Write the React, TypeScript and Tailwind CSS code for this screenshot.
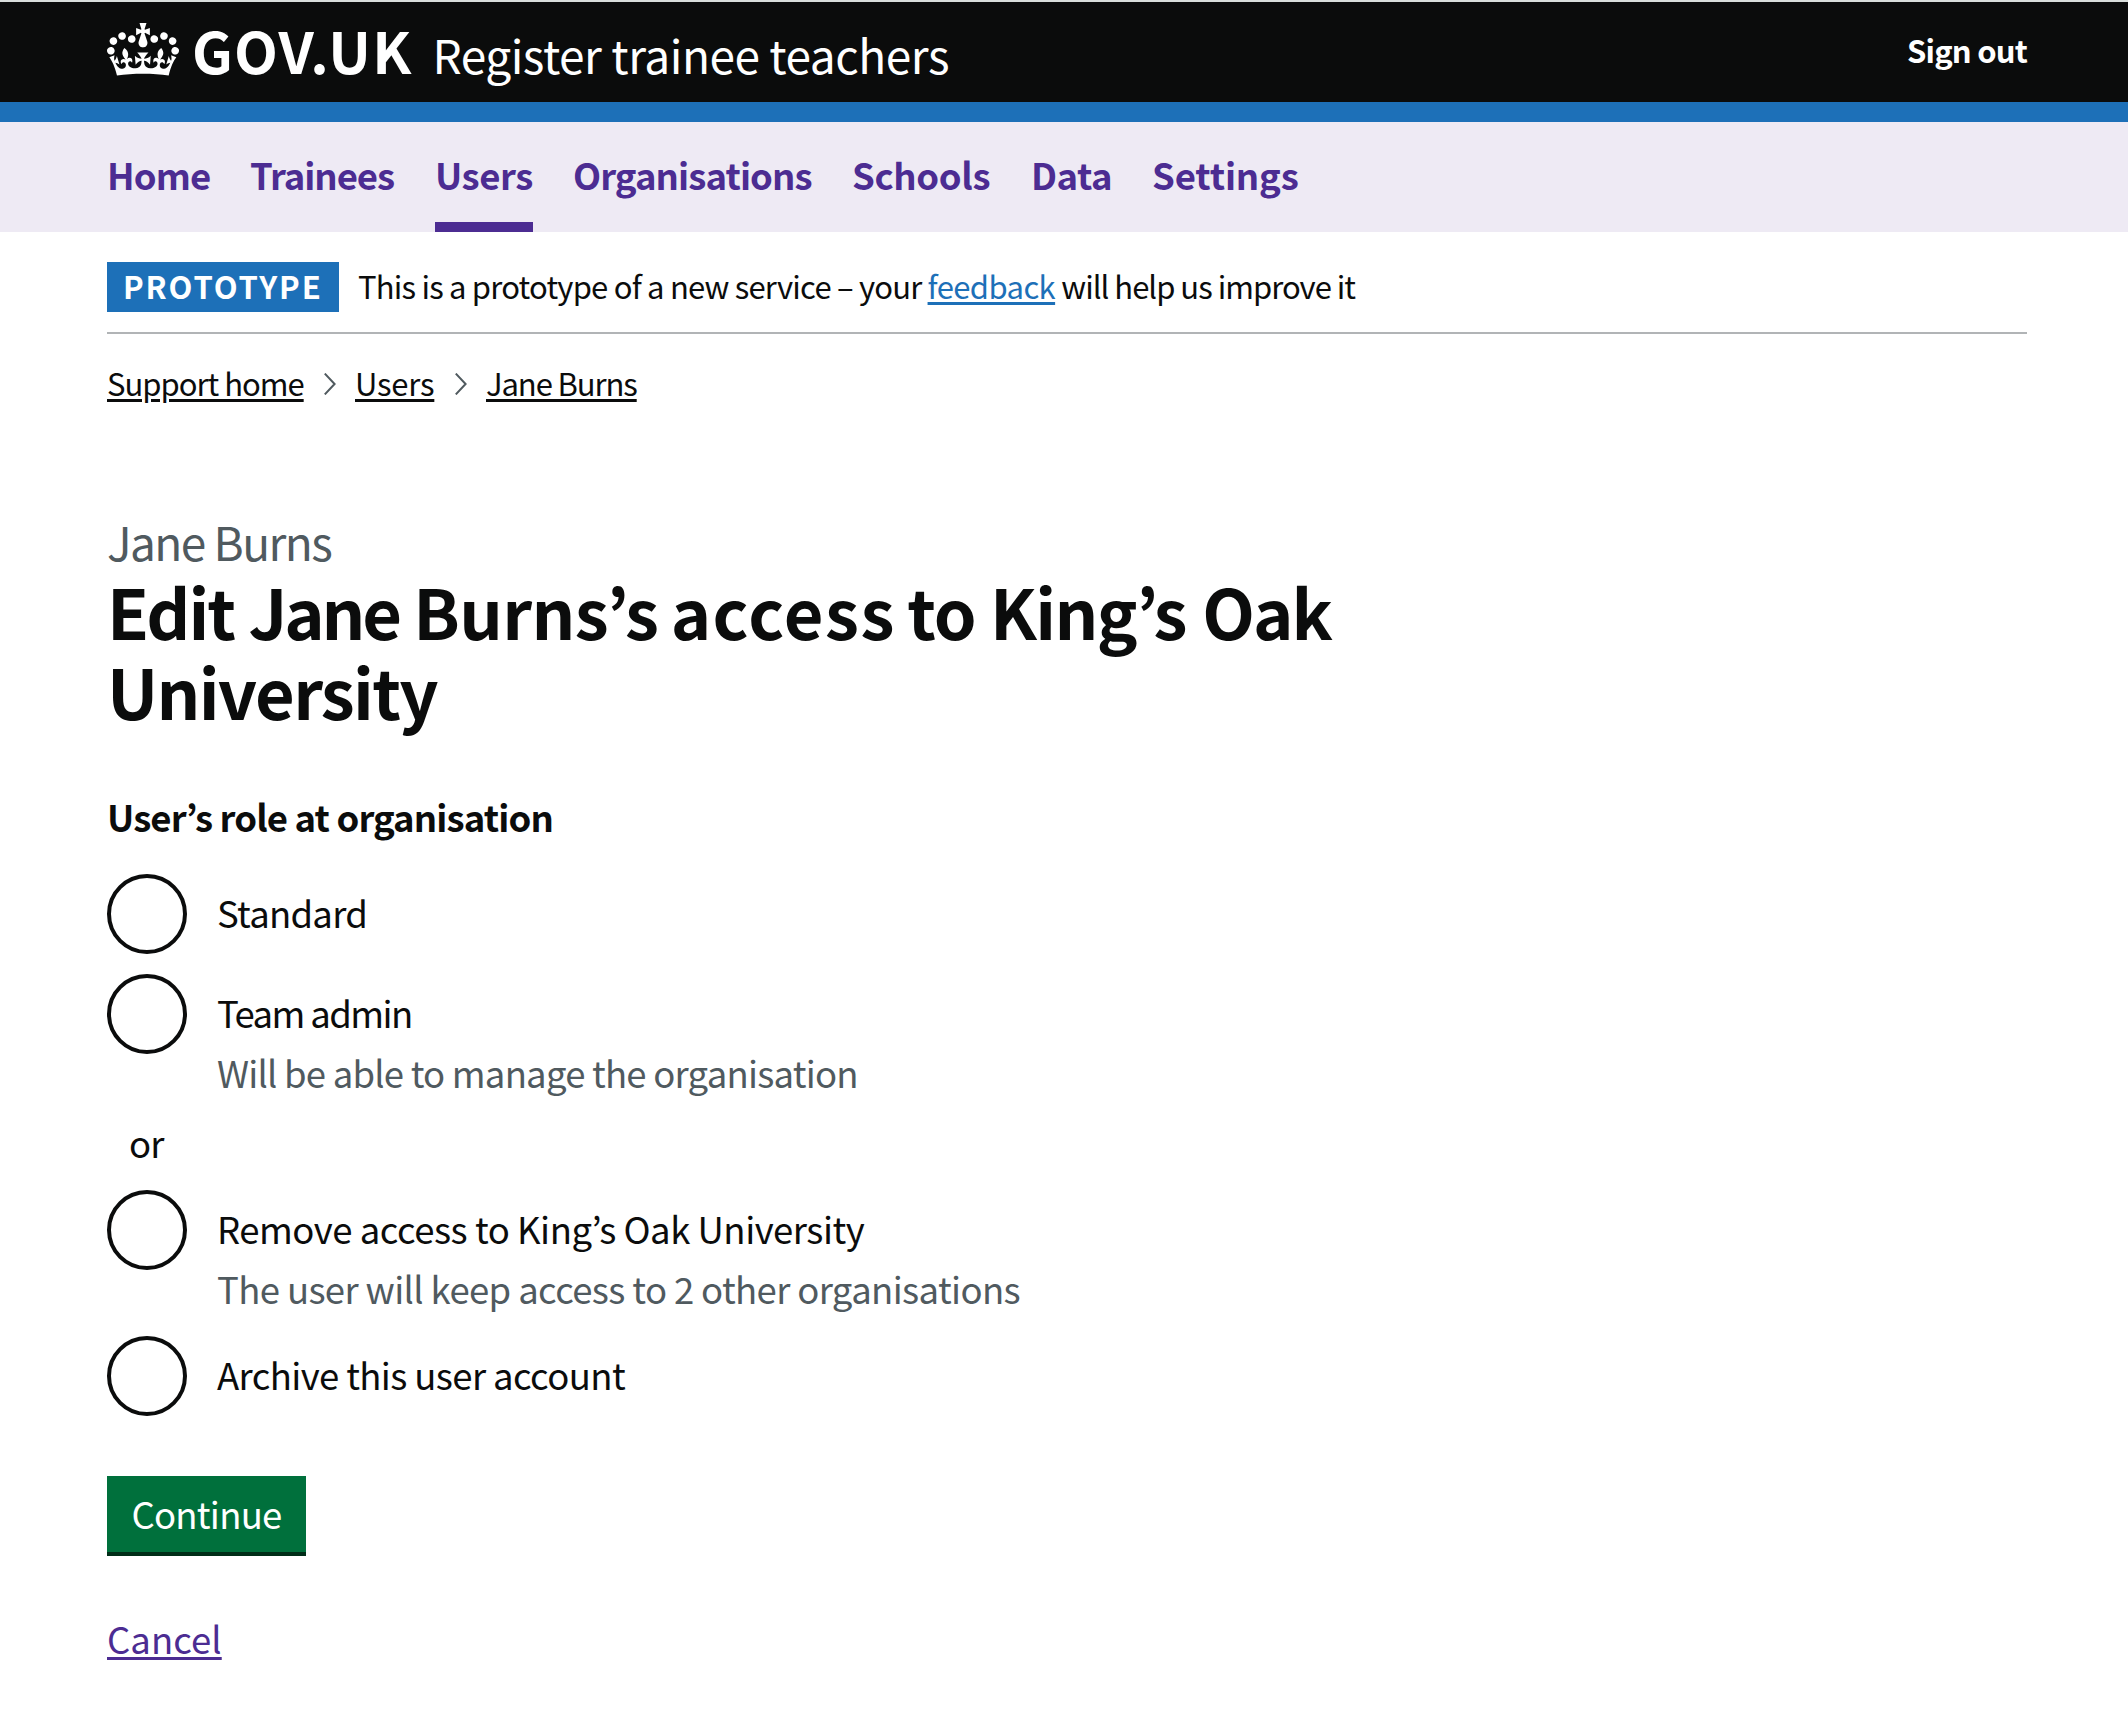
const crown =
  "M25 30.2c3.5 1.5 7.7-.2 9.1-3.7 1.5-3.6-.2-7.8-3.9-9.2-3.6-1.4-7.6.3-9.1 3.9-1.4 3.5.3 7.5 3.9 9zM9 39.5c3.6 1.5 7.8-.2 9.2-3.7 1.5-3.6-.2-7.8-3.9-9.1-3.6-1.5-7.6.2-9.1 3.8-1.4 3.5.3 7.5 3.8 9zM4.4 57.2c3.5 1.5 7.7-.2 9.1-3.8 1.5-3.6-.2-7.7-3.9-9.1-3.5-1.5-7.6.3-9.1 3.8-1.4 3.5.3 7.6 3.9 9.1zm38.3-21.4c3.5 1.5 7.7-.2 9.1-3.8 1.5-3.6-.2-7.7-3.9-9.1-3.6-1.5-7.6.3-9.1 3.8-1.3 3.6.4 7.7 3.9 9.1zm64.4-5.6c-3.6 1.5-7.8-.2-9.1-3.7-1.5-3.6.2-7.8 3.8-9.2 3.6-1.4 7.7.3 9.2 3.9 1.3 3.5-.4 7.5-3.9 9zm15.9 9.3c-3.6 1.5-7.7-.2-9.1-3.7-1.5-3.6.2-7.8 3.7-9.1 3.6-1.5 7.7.2 9.2 3.8 1.5 3.5-.3 7.5-3.8 9zm4.7 17.7c-3.6 1.5-7.8-.2-9.2-3.8-1.5-3.6.2-7.7 3.9-9.1 3.6-1.5 7.7.3 9.2 3.8 1.3 3.5-.4 7.6-3.9 9.1zM89.3 35.8c-3.6 1.5-7.8-.2-9.2-3.8-1.4-3.6.2-7.7 3.9-9.1 3.6-1.5 7.7.3 9.2 3.8 1.4 3.6-.3 7.7-3.9 9.1zM69.7 17.7l8.9 4.7V9.3l-8.9 2.8c-.2-.3-.5-.6-.9-.9L72.4 0H59.6l3.5 11.2c-.3.3-.6.5-.9.9l-8.8-2.8v13.1l8.8-4.7c.3.3.6.7.9.9l-5 15.4v.1c-.2.8-.4 1.6-.4 2.4 0 4.1 3.1 7.5 7 8.1h.2c.3 0 .7.1 1 .1.4 0 .7 0 1-.1h.2c4-.6 7.1-4.1 7.1-8.1 0-.8-.1-1.7-.4-2.4V34l-5.1-15.4c.4-.2.7-.6 1-.9zM66 92.8c16.9 0 32.8 1.1 47.1 3.2 4-16.9 8.9-26.7 14-33.5l-9.6-3.4c1 4.9 1.1 7.2 0 10.2-1.5-1.4-3-4.3-4.2-8.7L108.6 76c2.8-2 5-3.2 7.5-3.3-4.4 9.4-10 11.9-13.6 11.2-4.3-.8-6.3-4.6-5.6-7.9 1-4.7 5.7-5.9 8-.5 4.3-8.7-3-11.4-7.6-8.8 7.1-7.2 7.9-13.5 2.1-21.1-8 6.1-8.1 12.3-4.5 20.8-4.7-5.4-12.1-2.5-9.5 6.2 3.4-5.2 7.9-2 7.2 3.1-.6 4.3-6.4 7.8-13.5 7.2-10.3-.9-10.9-8-11.2-13.8 2.5-.5 7.1 1.8 11 7.3L80.2 60c-4.1 4.4-8 5.3-12.3 5.4 1.4-4.4 8-11.6 8-11.6H55.5s6.4 7.2 7.9 11.6c-4.2-.1-8-1-12.3-5.4l1.4 16.4c3.9-5.5 8.5-7.7 10.9-7.3-.3 5.8-.9 12.8-11.1 13.8-7.2.6-12.9-2.9-13.5-7.2-.7-5 3.8-8.3 7.1-3.1 2.7-8.7-4.6-11.6-9.4-6.2 3.7-8.5 3.6-14.7-4.6-20.8-5.8 7.6-5 13.9 2.2 21.1-4.7-2.6-11.9.1-7.7 8.8 2.3-5.5 7.1-4.2 8.1.5.7 3.3-1.3 7.1-5.7 7.9-3.5.7-9-1.8-13.5-11.2 2.5.1 4.7 1.3 7.5 3.3l-4.7-15.4c-1.2 4.4-2.7 7.2-4.3 8.7-1.1-3-.9-5.3 0-10.2l-9.5 3.4c5 6.9 9.9 16.7 14 33.5 14.8-2.1 30.8-3.2 47.7-3.2z";

const navItems = [
  { label: "Home", className: "w-[104px] tracking-[-0.9px]" },
  { label: "Trainees", className: "w-[144px] tracking-[-1.04px] -indent-px" },
  { label: "Users", className: "w-[98px] tracking-[-0.4px]", current: true },
  { label: "Organisations", className: "w-[239px] tracking-[-0.9px]" },
  { label: "Schools", className: "w-[139px] tracking-[-0.35px]" },
  { label: "Data", className: "w-[81px] tracking-[-0.5px]" },
  { label: "Settings", className: "w-[147px] tracking-[-0.14px]" },
];

function Header() {
  return (
    <header className="h-[122px] border-t-2 border-b-20 border-t-[#d9dedc] border-b-[#1d70b8] bg-[#0b0c0c] text-white">
      <div className="mx-auto flex w-[1920px] translate-x-[3px] items-start justify-between">
        <a href="#" className="flex items-start pt-[17px]">
          <svg viewBox="0 0 132 97" className="mt-1 h-[53px] w-[72px]" fill="currentColor" aria-hidden="true">
            <path d={crown} />
          </svg>
          <span className="flex items-baseline">
            <span className="ml-[13px] text-[57px] leading-[60px] font-bold tracking-[1.2px]">GOV.UK</span>
            <span className="ml-5 text-[46px] leading-[50px] tracking-[-0.47px]">Register trainee teachers</span>
          </span>
        </a>
        <a href="#" className="pt-7 text-[31px] leading-10 font-bold tracking-[-0.8px]">
          Sign out
        </a>
      </div>
    </header>
  );
}

function Navigation() {
  return (
    <nav className="h-[110px] bg-[#eeeaf4]">
      <ul className="mx-auto flex h-full w-[1920px] translate-x-[3px] gap-10">
        {navItems.map((item) => (
          <li
            key={item.label}
            className={`${item.className} ${item.current ? "border-b-10 border-[#4c2c92]" : ""} pt-[33px] text-[36.5px] leading-10 font-bold whitespace-nowrap text-[#4c2c92]`}
          >
            <a href="#">{item.label}</a>
          </li>
        ))}
      </ul>
    </nav>
  );
}

function PhaseBanner() {
  return (
    <div className="flex h-[102px] border-b-2 border-[#b1b4b6] pt-[30px]">
      <strong className="h-[50px] w-[232px] bg-[#1d70b8] pl-4 text-[31px] leading-[48px] font-bold tracking-[1.9px] text-white">
        PROTOTYPE
      </strong>
      <p className="ml-[19px] text-[31px] leading-[48px] tracking-[-0.79px] whitespace-nowrap">
        This is a prototype of a new service – your{" "}
        <a href="#" className="tracking-[-0.6px] text-[#1d70b8] underline decoration-[3px] underline-offset-[3px]">
          feedback
        </a>{" "}
        <span className="tracking-[-0.98px]">will help us improve it</span>
      </p>
    </div>
  );
}

function Chevron() {
  return (
    <svg viewBox="0 0 12 22" className="mt-[11px] h-[22px] w-3" fill="none" stroke="#505a5f" strokeWidth="2" aria-hidden="true">
      <path d="M.8.6 10.6 11 .8 21.4" />
    </svg>
  );
}

function Breadcrumbs() {
  const link = "underline decoration-[3px] underline-offset-[3px] whitespace-nowrap";
  return (
    <nav className="mt-7 flex h-10 text-[31px] leading-[42px]">
      <a href="#" className={`${link} w-[197px] tracking-[-1px]`}>Support home</a>
      <span className="ml-5"><Chevron /></span>
      <a href="#" className={`${link} ml-[19px] w-[79px] tracking-[-0.2px]`}>Users</a>
      <span className="ml-[21px]"><Chevron /></span>
      <a href="#" className={`${link} ml-[19px] tracking-[-1.1px]`}>Jane Burns</a>
    </nav>
  );
}

function Radio({ label, tracking, hint, hintTracking }: { label: string; tracking: string; hint?: string; hintTracking?: string }) {
  return (
    <div>
      <label className="flex h-20 items-start">
        <input type="radio" name="role" className="size-20 appearance-none rounded-full border-4 border-[#0b0c0c] bg-white" />
        <span className={`ml-[30px] leading-[78px] ${tracking}`}>{label}</span>
      </label>
      {hint && <p className={`-mt-[6px] ml-[110px] leading-[50px] text-[#505a5f] ${hintTracking}`}>{hint}</p>}
    </div>
  );
}

export default function App() {
  return (
    <div className="min-h-[1712px] bg-white font-['Noto_Sans_CJK_JP','Noto_Sans',sans-serif] text-[#0b0c0c]">
      <Header />
      <Navigation />
      <div className="mx-auto w-[1920px] translate-x-[3px]">
        <PhaseBanner />
        <Breadcrumbs />
        <main className="pt-[112px] text-[36.5px]">
          <p className="text-[46px] leading-[54px] tracking-[-1.57px] text-[#505a5f]">Jane Burns</p>
          <h1 className="mt-[3px] text-[68.5px] leading-[80px] font-bold whitespace-nowrap">
            <span className="block tracking-[-1.1px]">
              <span className="tracking-[-2px]">Edit</span> <span className="tracking-[-3.2px]">Jane</span>{" "}
              <span className="tracking-[-0.65px]">Burns’s</span> <span className="-ml-0.5 tracking-[1.5px]">access</span>{" "}
              <span className="-ml-[3px]">to</span> <span className="tracking-[-1.65px]">King’s</span>{" "}
              <span className="ml-0.5 tracking-[-2px]">Oak</span>
            </span>
            <span className="block tracking-[-1.7px]">University</span>
          </h1>
          <h2 className="mt-[61px] leading-[50px] font-bold tracking-[-0.88px]">User’s role at organisation</h2>
          <div className="mt-8 flex flex-col">
            <Radio label="Standard" tracking="tracking-[-0.75px]" />
            <div className="h-5" />
            <Radio
              label="Team admin"
              tracking="tracking-[-1.6px]"
              hint="Will be able to manage the organisation"
              hintTracking="tracking-[-0.78px]"
            />
            <p className="mt-5 mb-[22px] ml-[22px] leading-[50px] tracking-[-0.9px]">or</p>
            <Radio
              label="Remove access to King’s Oak University"
              tracking="tracking-[-0.48px]"
              hint="The user will keep access to 2 other organisations"
              hintTracking="tracking-[-0.63px]"
            />
            <div className="h-[22px]" />
            <Radio label="Archive this user account" tracking="tracking-[-0.61px]" />
          </div>
          <button className="mt-[60px] block h-20 w-[199px] border-b-4 border-[#002d18] bg-[#00703c] text-center leading-[72px] tracking-[-0.74px] text-white">
            Continue
          </button>
          <a
            href="#"
            className="mt-[58px] inline-block leading-[50px] tracking-[0.05px] text-[#4c2c92] underline decoration-[3px] underline-offset-[3px]"
          >
            Cancel
          </a>
        </main>
      </div>
    </div>
  );
}
